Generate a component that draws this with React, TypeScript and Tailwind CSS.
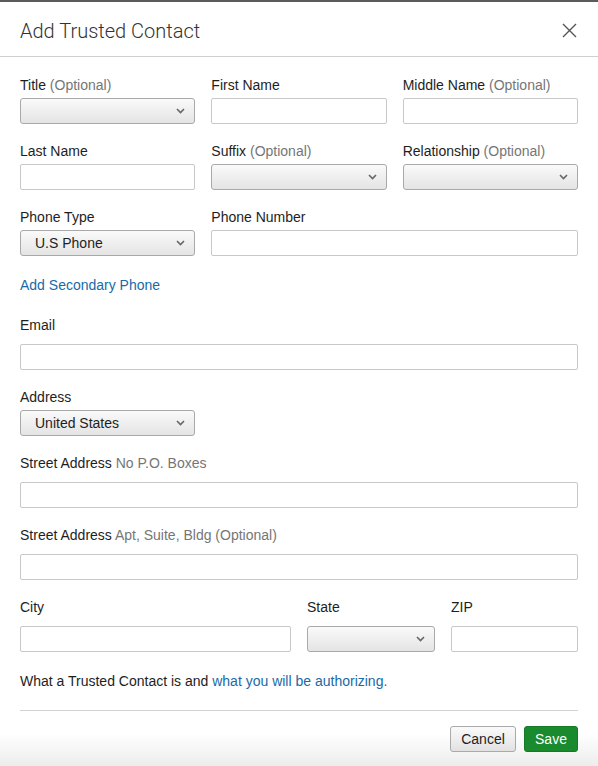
import type { ReactNode } from 'react';

const font = { fontFamily: '"Liberation Sans", Arial, sans-serif' };

const Opt = ({ children }: { children: ReactNode }) => (
  <span className="text-[#767676]">{children}</span>
);

const Label = ({ children, className = '' }: { children: ReactNode; className?: string }) => (
  <label className={`block text-[14px] leading-5 text-[#1e1e1e] ${className}`}>{children}</label>
);

const TextInput = ({ className = '' }: { className?: string }) => (
  <input
    type="text"
    className={`block h-[26px] w-full rounded-[2px] border border-[#c8c8c8] bg-white px-2 text-[14px] outline-none ${className}`}
  />
);

const Select = ({ value, className = '' }: { value?: string; className?: string }) => (
  <div
    className={`relative flex h-[26px] items-center rounded-[3px] border border-[#a9a9a9] bg-gradient-to-b from-[#fafafa] to-[#e4e4e4] pl-[14px] text-[14px] text-[#1e1e1e] ${className}`}
  >
    <span>{value}</span>
    <svg
      className="absolute right-[9px] top-1/2 -translate-y-1/2"
      width="9"
      height="6"
      viewBox="0 0 9 6"
      fill="none"
    >
      <polyline points="1,1 4.5,4.5 8,1" stroke="#666" strokeWidth="1.6" />
    </svg>
  </div>
);

const App = () => {
  return (
    <div className="h-[766px] w-[598px] overflow-hidden bg-white" style={font}>
      <div className="flex h-[57px] items-center justify-between border-t-2 border-b border-t-[#5b5b5b] border-b-[#cfcfcf] px-5 pt-[3px]">
        <h2
          className="text-[20px] font-light leading-7 text-[#333]"
          style={{ fontFamily: 'Roboto, "Liberation Sans", sans-serif' }}
        >
          Add Trusted Contact
        </h2>
        <svg width="15" height="15" viewBox="0 0 15 15" className="mr-[1px]">
          <path d="M1 1 L14 14 M14 1 L1 14" stroke="#555" strokeWidth="1.4" />
        </svg>
      </div>

      <div className="px-5 pt-[18px]">
        <div className="grid grid-cols-3 gap-x-4">
          <div>
            <Label>
              Title <Opt>(Optional)</Opt>
            </Label>
            <Select className="mt-[3px] w-full" />
          </div>
          <div>
            <Label>First Name</Label>
            <TextInput className="mt-[3px]" />
          </div>
          <div>
            <Label>
              Middle Name <Opt>(Optional)</Opt>
            </Label>
            <TextInput className="mt-[3px]" />
          </div>
        </div>

        <div className="mt-[17px] grid grid-cols-3 gap-x-4">
          <div>
            <Label>Last Name</Label>
            <TextInput className="mt-[3px]" />
          </div>
          <div>
            <Label>
              Suffix <Opt>(Optional)</Opt>
            </Label>
            <Select className="mt-[3px] w-full" />
          </div>
          <div>
            <Label>
              Relationship <Opt>(Optional)</Opt>
            </Label>
            <Select className="mt-[3px] w-full" />
          </div>
        </div>

        <div className="mt-[17px] grid grid-cols-3 gap-x-4">
          <div>
            <Label>Phone Type</Label>
            <Select value="U.S Phone" className="mt-[3px] w-full" />
          </div>
          <div className="col-span-2">
            <Label>Phone Number</Label>
            <TextInput className="mt-[3px]" />
          </div>
        </div>

        <a className="mt-[19px] block text-[14px] leading-5 text-[#1a6aa6]">Add Secondary Phone</a>

        <Label className="mt-5">Email</Label>
        <TextInput className="mt-[9px]" />

        <Label className="mt-[17px]">Address</Label>
        <Select value="United States" className="mt-[3px] w-[175px]" />

        <Label className="mt-[17px]">
          Street Address <Opt>No P.O. Boxes</Opt>
        </Label>
        <TextInput className="mt-[9px]" />

        <Label className="mt-[17px]">
          Street Address <Opt>Apt, Suite, Bldg (Optional)</Opt>
        </Label>
        <TextInput className="mt-[9px]" />

        <div className="mt-[17px] grid grid-cols-[271px_128px_1fr] gap-x-4">
          <div>
            <Label>City</Label>
            <TextInput className="mt-[9px]" />
          </div>
          <div>
            <Label>State</Label>
            <Select className="mt-[9px] w-full" />
          </div>
          <div>
            <Label>ZIP</Label>
            <TextInput className="mt-[9px]" />
          </div>
        </div>

        <p className="mt-[19px] text-[14px] leading-5 text-[#1e1e1e]">
          What a Trusted Contact is and{' '}
          <a className="text-[#1a6aa6]">what you will be authorizing.</a>
        </p>
      </div>

      <div className="mx-5 mt-[19px] border-t border-[#d2d2d2]" />

      <div className="flex h-[56px] justify-end gap-2 bg-gradient-to-b from-white from-40% to-[#ececec] px-5 pt-[15px]">
        <button className="h-[26px] w-[66px] rounded-[3px] border border-[#a9a9a9] bg-gradient-to-b from-[#fafafa] to-[#e2e2e2] text-[14px] text-[#1e1e1e]">
          Cancel
        </button>
        <button className="h-[26px] w-[54px] rounded-[3px] border border-[#157a26] bg-[#1a8a2e] text-[14px] text-white">
          Save
        </button>
      </div>
    </div>
  );
};

export default App;
